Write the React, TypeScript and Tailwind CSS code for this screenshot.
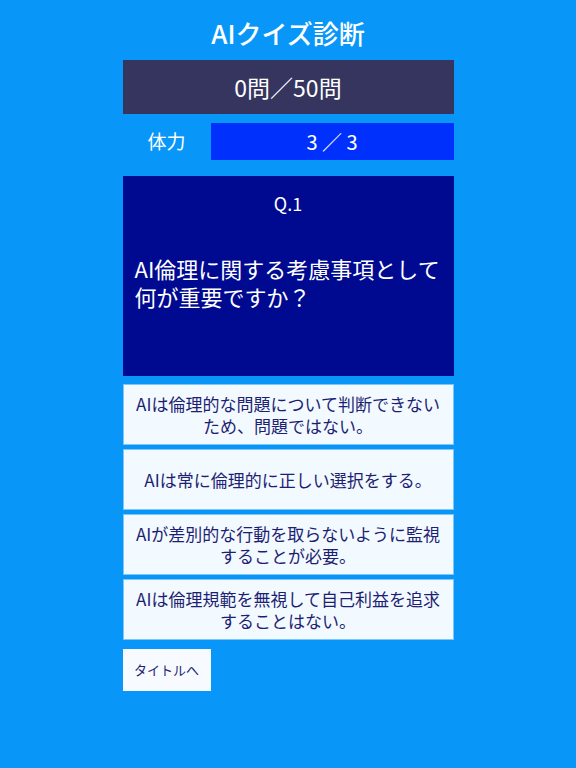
import React from "react";

const answers = [
  "AIは倫理的な問題について判断できないため、問題ではない。",
  "AIは常に倫理的に正しい選択をする。",
  "AIが差別的な行動を取らないように監視することが必要。",
  "AIは倫理規範を無視して自己利益を追求することはない。",
];

const App = () => {
  return (
    <div
      className="min-h-screen w-full bg-[#0897f8] text-white"
      style={{ fontFamily: '"Noto Sans CJK JP", "Noto Sans", sans-serif' }}
    >
      <div className="mx-auto flex w-[331px] flex-col pt-[14px]">
        <h1 className="text-center text-[26px] font-medium leading-[38px]">AIクイズ診断</h1>

        <div className="mt-[8px] flex h-[54px] items-center justify-center bg-[#353560] text-[23px]">
          0問／50問
        </div>

        <div className="mt-[9px] flex h-[37px]">
          <div className="flex w-[88px] items-center justify-center text-[19px]">体力</div>
          <div className="flex flex-1 items-center justify-center bg-[#0030fc] text-[20px]">3 ／ 3</div>
        </div>

        <div className="mt-[16px] h-[200px] bg-[#000a91] px-[12px] pt-[14px]">
          <p className="text-center text-[18px] leading-[26px]">Q.1</p>
          <p className="mt-[38px] text-[22px] leading-[28px]">
            AI倫理に関する考慮事項として何が重要ですか？
          </p>
        </div>

        <div className="mt-[8px] flex flex-col gap-[4px]">
          {answers.map((a, i) => (
            <button
              key={i}
              className="flex h-[61px] items-center justify-center border border-[#7cc6f8] bg-[#f2f9ff] px-[9px] text-center text-[17px] leading-[22px] text-[#1d1f72]"
            >
              {a}
            </button>
          ))}
        </div>

        <button className="mt-[9px] flex h-[42px] w-[88px] items-center justify-center bg-[#f7fbff] text-[13px] text-[#1d1f72]">
          タイトルへ
        </button>
      </div>
    </div>
  );
};

export default App;
